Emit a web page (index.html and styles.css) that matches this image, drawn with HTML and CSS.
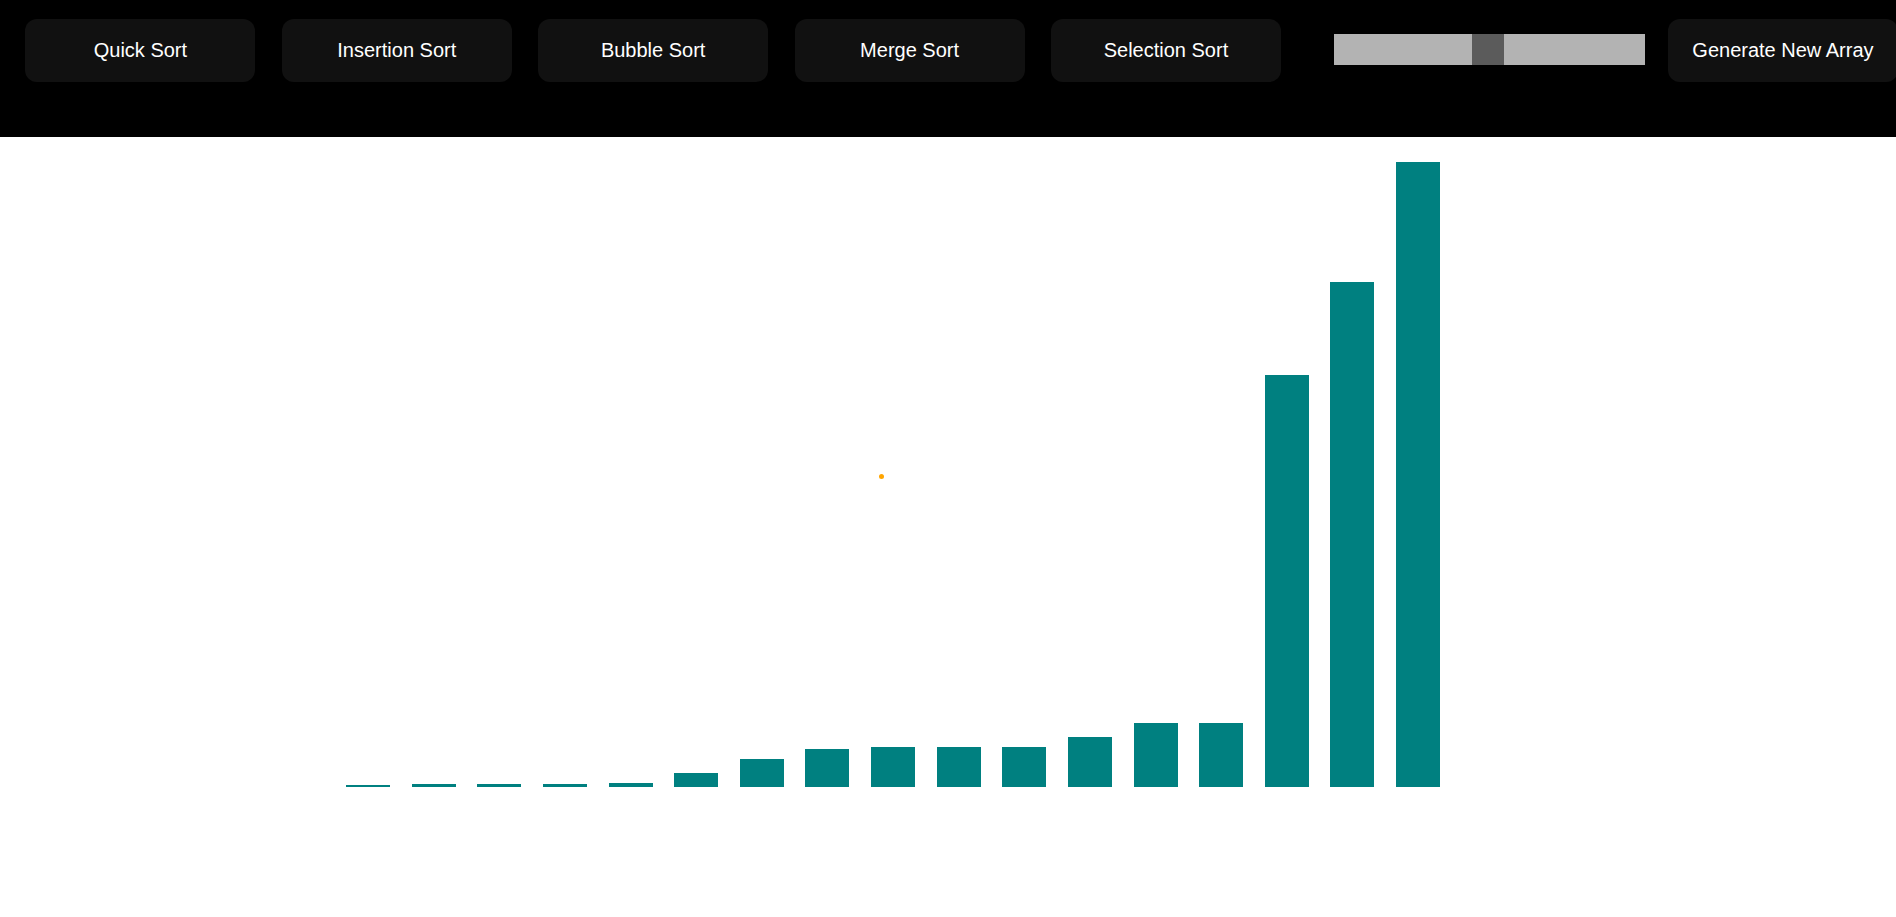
FILE: index.html
```html
<!DOCTYPE html>
<html lang="en">
<head>
<meta charset="utf-8">
<title>Sorting Visualizer</title>
<link rel="stylesheet" href="styles.css">
</head>
<body>
<header class="toolbar">
  <button class="btn">Quick Sort</button>
  <button class="btn">Insertion Sort</button>
  <button class="btn">Bubble Sort</button>
  <button class="btn">Merge Sort</button>
  <button class="btn">Selection Sort</button>
  <div class="slider"><div class="thumb"></div></div>
  <button class="btn btn-gen">Generate New Array</button>
</header>
<main class="chart">
  <div class="bar" style="height:2px"></div>
  <div class="bar" style="height:3px"></div>
  <div class="bar" style="height:3px"></div>
  <div class="bar" style="height:3px"></div>
  <div class="bar" style="height:4px"></div>
  <div class="bar" style="height:14px"></div>
  <div class="bar" style="height:28px"></div>
  <div class="bar" style="height:38px"></div>
  <div class="bar" style="height:40px"></div>
  <div class="bar" style="height:40px"></div>
  <div class="bar" style="height:40px"></div>
  <div class="bar" style="height:50px"></div>
  <div class="bar" style="height:64px"></div>
  <div class="bar" style="height:64px"></div>
  <div class="bar" style="height:412px"></div>
  <div class="bar" style="height:505px"></div>
  <div class="bar" style="height:625px"></div>
  <span class="dot"></span>
</main>
</body>
</html>
```
FILE: styles.css
```css
html, body {
  margin: 0;
  padding: 0;
  overflow: hidden;
  background: #ffffff;
  font-family: "Liberation Sans", Arial, sans-serif;
}
.toolbar {
  display: flex;
  align-items: flex-start;
  height: 137px;
  box-sizing: border-box;
  padding: 19px 0 0 25.4px;
  background: #000000;
  white-space: nowrap;
}
.btn {
  flex: none;
  width: 230px;
  height: 63px;
  margin-right: 26.4px;
  border: none;
  border-radius: 12px;
  background: #111111;
  color: #ffffff;
  font-family: "Liberation Sans", Arial, sans-serif;
  font-size: 20px;
  padding: 0;
}
.btn:nth-child(5) {
  margin-right: 53px;
}
.slider {
  flex: none;
  position: relative;
  width: 311px;
  height: 31px;
  margin-top: 15px;
  margin-right: 23px;
  background: #b3b3b3;
}
.thumb {
  position: absolute;
  left: 138px;
  top: 0;
  width: 32px;
  height: 31px;
  background: #5b5b5b;
}
.btn-gen {
  margin-right: 0;
}
.chart {
  position: relative;
  display: flex;
  align-items: flex-end;
  height: 650px;
  padding-left: 346px;
}
.bar {
  flex: none;
  width: 44px;
  margin-right: 21.625px;
  background: #008080;
}
.dot {
  position: absolute;
  left: 879px;
  top: 337px;
  width: 5px;
  height: 5px;
  border-radius: 50%;
  background: #ffa500;
}
```
